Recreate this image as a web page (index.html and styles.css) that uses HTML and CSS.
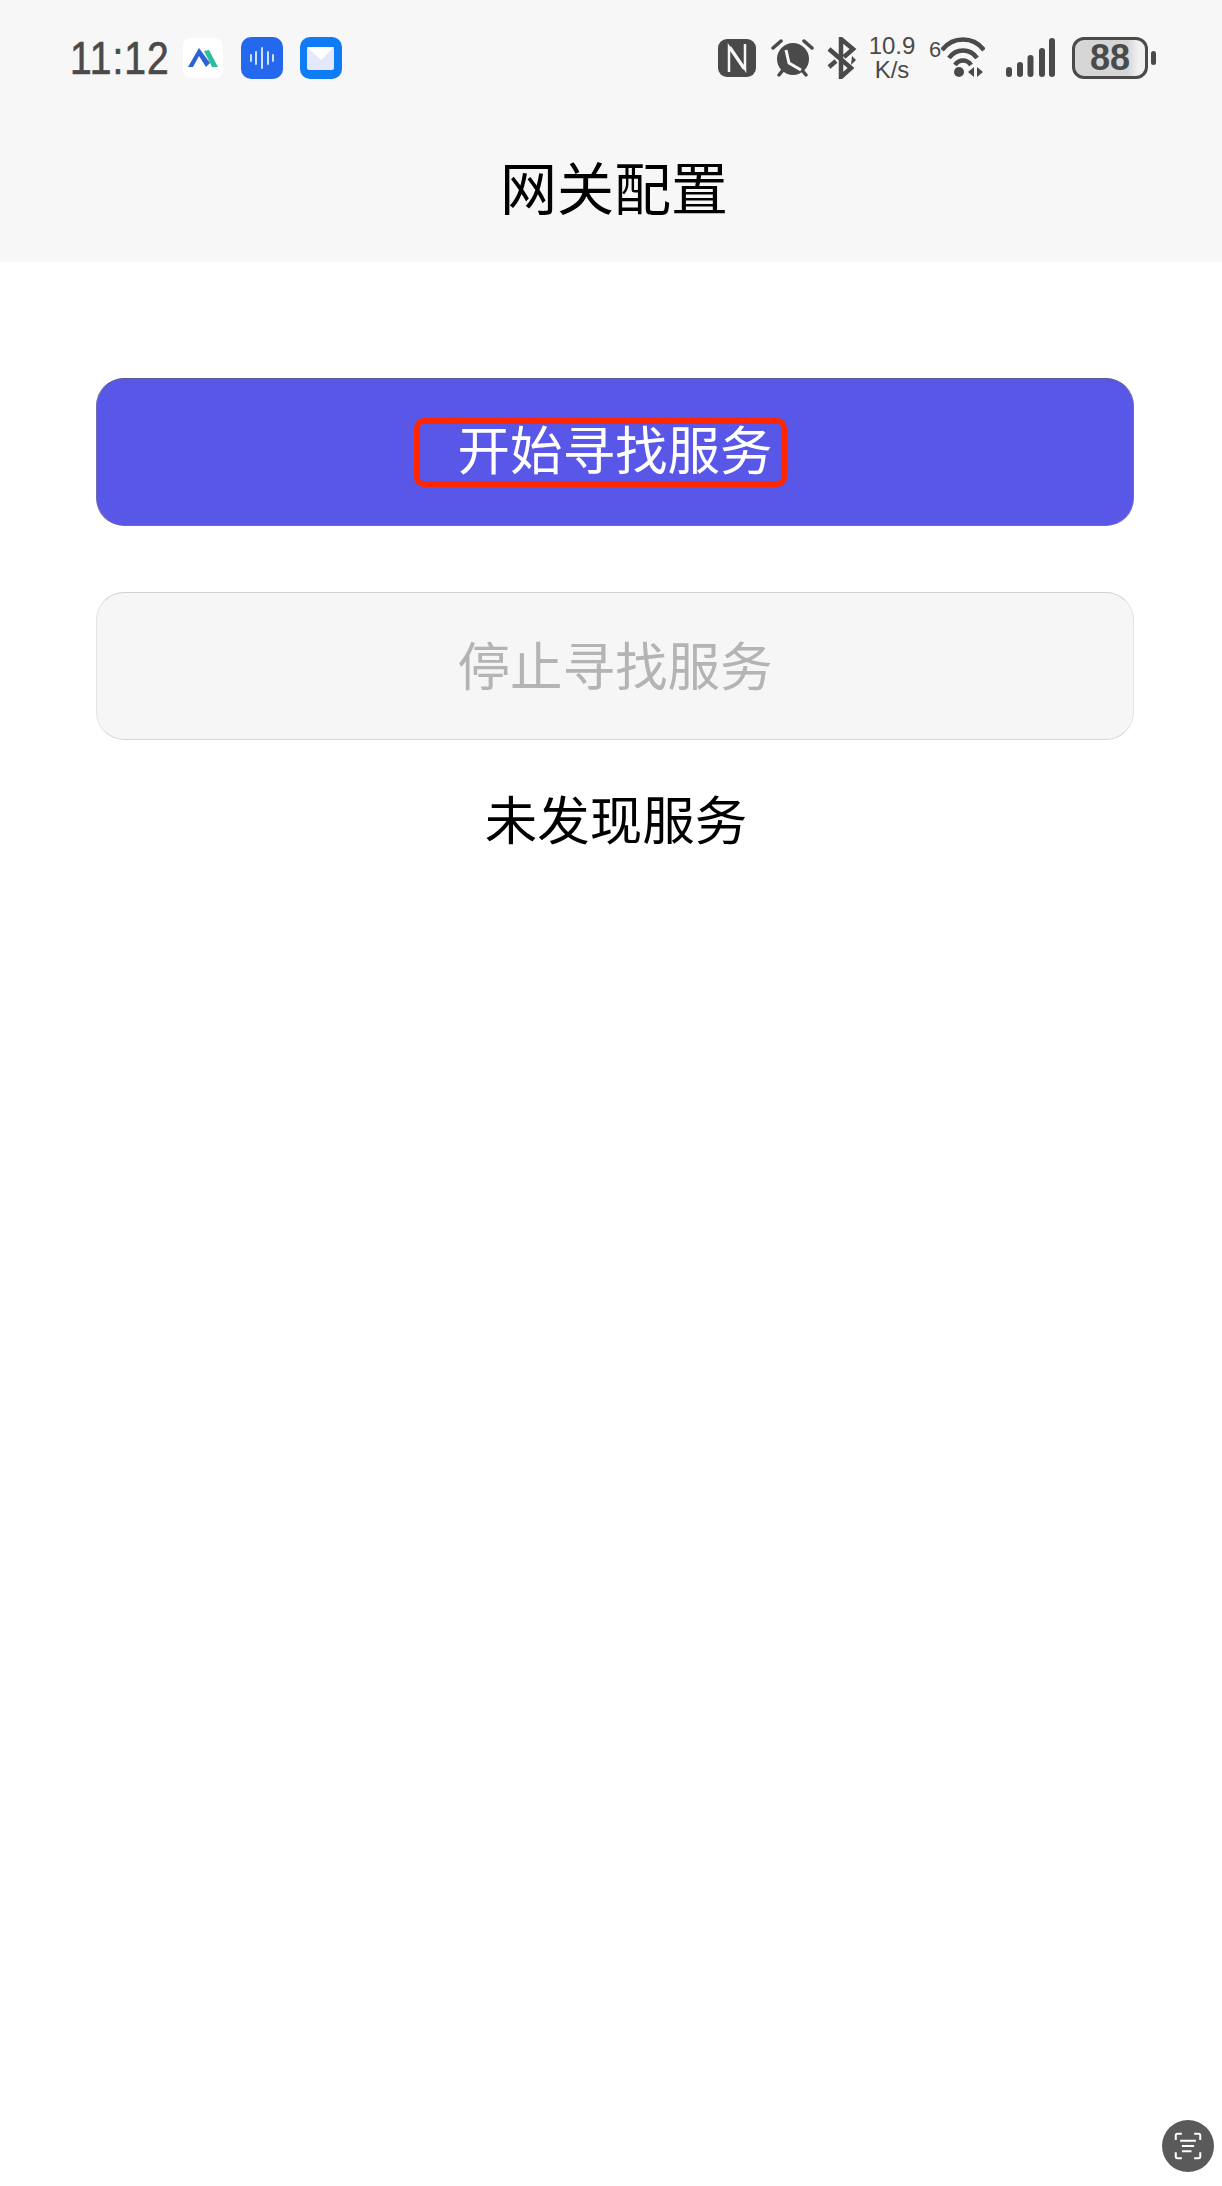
FILE: index.html
```html
<!DOCTYPE html>
<html>
	<head>
		<meta charset="utf-8">
		<title>网关配置</title>
		<link rel="stylesheet" href="styles.css">
	</head>
	<body>
		<div class="header">
			<div class="status">
				<div class="status-left">
					<span class="time">11:12</span>
					<svg class="app-icon" width="40" height="40" viewBox="0 0 40 40">
						<rect width="40" height="40" rx="8" fill="#fff"/>
						<path d="M21 13 L26 12 L35 29 L29 29 Z" fill="#2dbd9b"/>
						<path d="M5 29 L16 10 L27 25 L23 29 L16 18 L10 29 Z" fill="#2b62d6"/>
					</svg>
					<svg class="app-icon gap-mic" width="42" height="42" viewBox="0 0 42 42">
						<rect width="42" height="42" rx="10" fill="#2468ee"/>
						<path d="M10 18v6M15 15v12M21 11v20M27 15v12M32 18v6" stroke="#cfe0ff" stroke-width="2" stroke-linecap="round"/>
					</svg>
					<svg class="app-icon gap-mail" width="42" height="42" viewBox="0 0 42 42">
						<rect width="42" height="42" rx="10" fill="#0f7bf5"/>
						<rect x="7" y="10" width="27" height="23" rx="2" fill="#e4e8fa"/>
						<path d="M7 10 H34 L21 23 Z" fill="#fff"/>
					</svg>
				</div>
				<div class="status-right">
					<svg width="38" height="38" viewBox="0 0 38 38">
						<rect width="38" height="38" rx="9" fill="#4a4a4a"/>
						<path d="M11 33 V8 L26 30 M27 5 V30 L12 8" fill="none" stroke="#f7f7f7" stroke-width="2.500"/>
					</svg>
					<svg class="gap-alarm" width="43" height="40" viewBox="0 0 43 40">
						<circle cx="22" cy="21" r="16" fill="#4a4a4a"/>
						<path d="M2 10 L10 3 M41 10 L33 3 M8 37 L12 32 M35 37 L31 32" stroke="#4a4a4a" stroke-width="3.500" stroke-linecap="round"/>
						<path d="M15 12 L18 25 L30 32" fill="none" stroke="#f7f7f7" stroke-width="3"/>
					</svg>
					<svg class="gap-bt" width="30" height="42" viewBox="0 0 30 42">
						<path d="M2 12 L24 31 L14 40 V2 L26 12 L17 20" fill="none" stroke="#4a4a4a" stroke-width="4.500"/>
						<path d="M2 30 L9 24" stroke="#4a4a4a" stroke-width="4.500"/>
						<path d="M25 19 L29 23 L24 28 Z" fill="#4a4a4a"/>
					</svg>
					<div class="speed">
						<span>10.9</span>
						<span>K/s</span>
					</div>
					<span class="wifi-num">6</span>
					<svg width="44" height="42" viewBox="0 0 44 42">
						<path d="M1 13 C12 -1 32 -1 43 13 M8 21 C15 11 29 11 36 21 M14 28 C18 22 26 22 30 28" fill="none" stroke="#4a4a4a" stroke-width="4.500"/>
						<circle cx="18" cy="35" r="5" fill="#4a4a4a"/>
						<path d="M27 35 L33 30 V40 Z M36 30 L42 35 L36 40 Z" fill="#4a4a4a"/>
					</svg>
					<svg class="gap-signal" width="50" height="40" viewBox="0 0 50 40">
						<path d="M3 32 V36 M14 27 V36 M24.500 20 V36 M36 13 V36 M46 3 V36" stroke="#4a4a4a" stroke-width="6" stroke-linecap="round"/>
					</svg>
					<div class="battery">
						<div class="battery-body">
							<span class="battery-num">88</span>
						</div>
						<div class="battery-nub"></div>
					</div>
				</div>
			</div>
			<div class="title">网关配置</div>
		</div>

		<div class="content">
			<button class="btn btn-start"><span class="btn-label">开始寻找服务</span></button>
			<button class="btn btn-stop" disabled>停止寻找服务</button>
			<p class="tip">未发现服务</p>
		</div>

		<div class="float-btn">
			<svg width="28" height="28" viewBox="0 0 32 32">
				<path d="M2 9 V4 Q2 2 4 2 H9 M23 2 H28 Q30 2 30 4 V9 M30 23 V28 Q30 30 28 30 H23 M9 30 H4 Q2 30 2 28 V23" fill="none" stroke="#fff" stroke-width="2.300"/>
				<path d="M7 10 H25 M9 16 H23 M9 22 H20" stroke="#fff" stroke-width="2.300"/>
			</svg>
		</div>
	</body>
</html>
```

FILE: styles.css
```css
* {
	margin: 0;
	padding: 0;
	box-sizing: border-box;
}
html, body {
	height: 100%;
}
body {
	position: relative;
	background: #fff;
	overflow: hidden;
	font-family: "Liberation Sans", "Noto Sans CJK SC", sans-serif;
}
.header {
	height: 262px;
	background: #f7f7f7;
	padding-top: 36px;
}
.status {
	height: 44px;
	padding: 0 66px 0 70px;
	display: flex;
	justify-content: space-between;
	align-items: center;
	color: #4a4a4a;
}
.status-left, .status-right {
	display: flex;
	align-items: center;
}
.time {
	width: 113px;
	font-size: 39px;
	line-height: 44px;
	letter-spacing: 1px;
	-webkit-text-stroke: 0.6px #4a4a4a;
	transform: scaleY(1.2);
	transform-origin: left center;
}
.gap-mic {
	margin-left: 18px;
}
.gap-mail {
	margin-left: 17px;
}
.gap-alarm {
	margin-left: 15px;
}
.gap-bt {
	margin-left: 13px;
}
.gap-signal {
	margin-left: 21px;
}
.speed {
	width: 50px;
	margin-left: 10px;
	display: flex;
	flex-direction: column;
	align-items: center;
	font-size: 24px;
	line-height: 24px;
}
.wifi-num {
	width: 12px;
	margin-left: 12px;
	margin-bottom: 16px;
	font-size: 22px;
	line-height: 24px;
}
.battery {
	margin-left: 16px;
	display: flex;
	align-items: center;
}
.battery-body {
	width: 76px;
	height: 42px;
	border: 3px solid #4a4a4a;
	border-radius: 12px;
	background: linear-gradient(90deg, #d6d6d6 75%, #f0f0f0 90%);
	display: flex;
	align-items: center;
	justify-content: center;
}
.battery-num {
	font-size: 36px;
	line-height: 36px;
	font-weight: bold;
}
.battery-nub {
	width: 5px;
	height: 14px;
	margin-left: 3px;
	border-radius: 3px;
	background: #4a4a4a;
}
.title {
	margin-top: 72px;
	padding-left: 6px;
	text-align: center;
	font-size: 57px;
	line-height: 76px;
	color: #000;
}
.content {
	padding: 116px 88px 0 96px;
	display: flex;
	flex-direction: column;
	align-items: stretch;
}
.btn {
	height: 148px;
	border-radius: 28px;
	font-family: inherit;
	font-size: 52.5px;
	display: flex;
	align-items: center;
	justify-content: center;
}
.btn-start {
	background: #5957e8;
	border: 1px solid #6f6db8;
	border-top-color: #5a5a94;
	color: #fff;
}
.btn-stop {
	margin-top: 66px;
	padding-bottom: 6px;
	background: #f6f6f6;
	border: 1px solid #e4e4e4;
	border-top-color: #d2d2d2;
	border-bottom-color: #d6d6d6;
	color: #b4b4b4;
}
.btn-label {
	position: relative;
	line-height: 64px;
}
/* red mark over the label */
.btn-label::after {
	content: "";
	position: absolute;
	left: -43px;
	right: -14px;
	top: -2px;
	bottom: -3px;
	border: 6px solid #ff2600;
	border-radius: 10px;
}
.tip {
	margin-top: 47px;
	padding-left: 2px;
	text-align: center;
	font-size: 52.5px;
	line-height: 70px;
	color: #000;
}
.float-btn {
	position: absolute;
	left: 1162px;
	top: 2120px;
	width: 52px;
	height: 52px;
	border-radius: 50%;
	background: #5a5a5a;
	display: flex;
	align-items: center;
	justify-content: center;
}
```
